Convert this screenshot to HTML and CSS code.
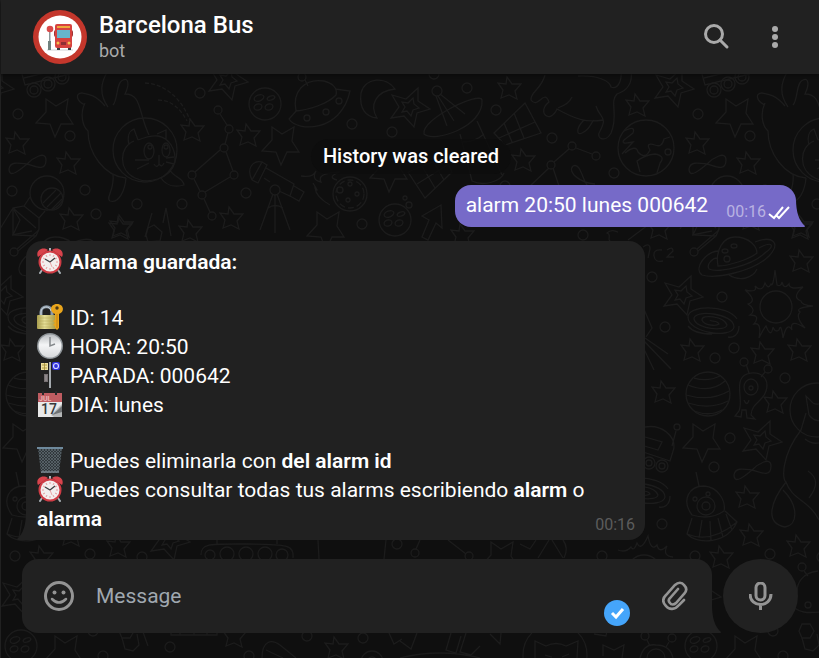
FILE: index.html
```html
<!DOCTYPE html>
<html lang="es">
<head>
  <meta charset="UTF-8">
  <meta name="viewport" content="width=device-width, initial-scale=1">
  <title>Barcelona Bus</title>
  <link rel="stylesheet" href="styles.css">
</head>
<body>
  <svg class="wallpaper" aria-hidden="true">
    <defs>
      <path id="star" d="M-3 -11 L2 -4 L11 -4 L5 3 L7 11 L-1 7 L-9 10 L-7 2 L-12 -5 L-4 -4 Z"/>
      <path id="bigstar" d="M-8 -18 L2 -11 L14 -18 L12 -4 L19 7 L7 7 L1 20 L-4 7 L-18 6 L-8 -5 Z"/>
      <g id="doublestar">
        <path d="M8 -19 L8 -6 L20 2 L7 6 L4 20 L-6 9 L-19 11 L-11 0 L-18 -12 L-4 -8 Z"/>
        <path d="M3 -9 L4 -3 L9 1 L3 3 L1 9 L-3 4 L-8 5 L-5 0 L-8 -5 L-2 -4 Z"/>
      </g>
      <circle id="ring" r="5"/>
      <circle id="dot" r="4"/>
      <g id="moon">
        <circle r="16"/>
        <ellipse cx="-6" cy="-6" rx="5" ry="3" transform="rotate(-20 -6 -6)"/>
        <ellipse cx="6" cy="-6" rx="4" ry="2" transform="rotate(-20 6 -6)"/>
        <ellipse cx="-7" cy="3" rx="4" ry="3" transform="rotate(-20 -7 3)"/>
        <ellipse cx="4" cy="3" rx="4" ry="3" transform="rotate(-20 4 3)"/>
      </g>
      <path id="infinity" d="M0 0 C6 -6 19 -14 19 -4 C19 9 6 1 0 0 C-8 -1 -17 -3 -18 5 C-18 15 -7 6 0 0 Z"/>
      <path id="spiral" d="M25 -3 C15 -18 -24 -17 -24 -5 C-24 11 20 17 22 5 C22 -9 -19 -13 -18 -3 C-16 7 14 10 15 3 C12 -6 -11 -8 -10 -2 C-8 4 5 4 7 2 C5 -2 -1 0 -2 -2 M27 4 C27 14 20 16 16 15 M-24 4 C-18 12 -3 12 0 12"/>

      <g id="tile">
        <!-- top row -->
        <use href="#doublestar" x="-6" y="87"/>
        <path d="M22 74 L25 85 L70 74 M24 78 L64 68"/>
        <circle cx="34" cy="90" r="7"/><circle cx="34" cy="90" r="4"/>
        <circle cx="48" cy="84" r="7"/><circle cx="48" cy="84" r="4"/>
        <circle cx="62" cy="77" r="7"/><circle cx="62" cy="77" r="4"/>
        <use href="#ring" x="18" y="114"/><use href="#ring" x="70" y="136"/>
        <use href="#ring" x="12" y="191"/><use href="#ring" x="85" y="190"/>
        <use href="#ring" x="96" y="214"/><use href="#ring" x="137" y="204"/>
        <use href="#ring" x="182" y="204"/><use href="#ring" x="246" y="193"/>
        <use href="#ring" x="200" y="93"/>
        <use href="#bigstar" x="54" y="117"/>
        <use href="#star" x="18" y="143"/><use href="#star" x="69" y="163"/>
        <use href="#star" x="72" y="219"/><use href="#star" x="122" y="226"/>
        <use href="#star" x="191" y="231"/><use href="#star" x="232" y="218"/>
        <use href="#star" x="193" y="130"/><use href="#star" x="249" y="135"/>
        <use href="#bigstar" x="280" y="145"/>
        <use href="#infinity" x="27" y="164"/>
        <use href="#doublestar" x="228" y="80"/>
        <use href="#moon" x="265" y="104"/>
        <path d="M145 83 C165 84 181 98 190 120 M158 100 C171 100 180 108 187 121" stroke-dasharray="4 2"/>

        <!-- hatched planet and capsule -->
        <circle cx="47" cy="193" r="17"/><circle cx="52" cy="199" r="11"/>
        <path d="M43 203 L56 190 M47 207 L61 193 M52 209 L62 199 M30 197 L24 206 L13 208 L13 235 L36 236 L39 229 L39 218 L45 211 M24 206 L39 218 M13 208 L36 228 M14 210 L20 220 L13 235 M13 208 L0 229 M36 236 L18 251"/>

        <!-- floating cat -->
        <circle cx="145" cy="150" r="32"/>
        <path d="M149 135 C138 112 142 94 125 94 C130 84 128 77 123 80 C116 82 118 100 113 105 M108 107 C98 93 102 80 108 71 M105 106 C96 95 88 94 82 93 C75 93 76 101 85 105 M85 103 C80 113 82 126 88 131 C88 153 104 176 126 178"/>
        <path d="M129 145 C127 137 129 131 134 129 L138 140 M134 141 C119 147 118 170 135 178 C147 184 170 180 175 162 C176 149 169 138 158 136 C151 135 143 138 138 140 M157 134 L166 130 L166 139 M113 174 C115 190 105 198 110 201 C119 204 125 190 126 178 M161 178 C167 187 177 187 184 185 C183 177 174 178 170 170"/>
        <ellipse cx="149" cy="151" rx="5" ry="8"/><ellipse cx="166" cy="150" rx="4" ry="7"/>
        <circle cx="150" cy="147" r="2"/><circle cx="166" cy="147" r="2"/>
        <path d="M159 155 L159 164 M154 164 Q157 169 159 164 Q162 168 164 163 M149 160 L135 160 M149 163 L137 169 M166 158 L174 157 M166 162 L174 164"/>

        <!-- constellation -->
        <use href="#dot" x="218" y="110"/><use href="#dot" x="229" y="129"/><use href="#dot" x="224" y="148"/>
        <use href="#dot" x="234" y="175"/><use href="#dot" x="202" y="195"/><use href="#dot" x="192" y="175"/>
        <use href="#dot" x="212" y="216"/>
        <path d="M220 114 L227 125 M228 133 L225 144 M220 150 L195 172 M226 152 L233 171 M230 177 L205 192 M194 179 L200 191 M204 199 L210 212"/>

        <!-- telescope -->
        <path d="M252 180 C246 168 253 160 262 162 L252 180 M262 162 L267 165 L258 183 L252 180 M266 168 L294 184 L290 196 L279 191 M264 178 L270 182 M294 186 L304 192 L299 201 L290 196 M273 194 L260 230 M275 195 L275 233 M277 194 L290 230 M268 208 Q275 203 283 208"/>
        <circle cx="275" cy="190" r="5"/>

        <!-- rocket tip and hexagon under the cat -->
        <path d="M152 213 L145 237 M163 223 L166 208 L171 236 M148 228 L154 225 L162 232 L160 241 L148 242 L146 235 Z"/>

        <!-- flying saucer -->
        <path d="M296 111 C292 92 304 78 324 81 C332 83 338 88 336 95 C328 104 308 110 296 111 M297 110 L289 119 C297 132 341 133 350 91 L335 89"/>
        <circle cx="307" cy="118" r="3"/><circle cx="326" cy="112" r="3"/><circle cx="339" cy="101" r="3"/>
        <use href="#dot" x="302" y="77"/><path d="M305 80 L308 86"/>

        <!-- crescent, radio dish, panels -->
        <path d="M395 89 C386 76 365 77 361 93 C359 109 366 117 377 118 C369 105 376 91 395 89 Z"/>
        <use href="#doublestar" x="410" y="107"/>
        <use href="#ring" x="467" y="88"/><use href="#ring" x="352" y="124"/><use href="#ring" x="392" y="132"/>
        <use href="#ring" x="496" y="110"/><use href="#ring" x="434" y="74"/><use href="#ring" x="362" y="224"/>
        <use href="#ring" x="552" y="138"/><use href="#ring" x="505" y="186"/>
        <use href="#star" x="510" y="88"/><use href="#star" x="524" y="160"/>
        <use href="#bigstar" x="388" y="172"/><use href="#bigstar" x="325" y="230"/>
        <use href="#ring" x="437" y="91"/>
        <path d="M436 96 L447 126 M438 96 L454 121 M440 94 L465 114 M424 134 C434 143 484 127 482 100 C480 91 421 119 424 134 Z M477 121 L502 175 M460 134 L472 181 C484 187 501 181 504 173 M463 142 Q475 142 484 134"/>
        <path d="M494 133 L525 103 L541 133 L505 145 Z M504 123 L512 142 M514 113 L524 138 M499 138 L535 122 M408 172 L445 157 L452 172 L425 198 Z M417 184 L449 164 M422 166 L435 188 M433 161 L444 180"/>

        <!-- comet -->
        <circle cx="350" cy="194" r="17"/><circle cx="350" cy="194" r="14" stroke-dasharray="6 3"/>
        <circle cx="350" cy="184" r="2"/><circle cx="357" cy="194" r="2"/><circle cx="348" cy="200" r="2"/><circle cx="340" cy="190" r="3"/>
        <path d="M301 176 Q313 178 316 171 Q311 180 321 182 Q316 173 340 172 Q326 177 337 180 M313 183 Q320 194 315 188 Q316 197 330 205"/>
        <use href="#moon" x="395" y="220"/>
        <circle cx="405" cy="198" r="2"/><circle cx="409" cy="205" r="3"/>
        <path d="M422 216 L441 205 L442 228 L436 223 L428 240 L422 237 L429 220 Z"/>
        <use href="#star" x="463" y="235"/>

        <!-- cat walking away -->
        <path d="M545 75 C541 90 530 92 531 100 C538 110 544 88 549 102 C536 112 550 125 557 109 C575 119 586 123 603 120 M558 108 Q569 104 572 97 M584 120 C575 129 577 136 582 133 C590 130 591 122 594 120 M596 106 C600 119 608 116 600 131 C595 139 606 143 611 133 C619 115 609 102 617 94 C627 91 633 83 631 70 M578 76 C600 75 610 82 611 87 C618 90 622 80 621 72"/>
        <use href="#star" x="638" y="105"/>
        <use href="#dot" x="572" y="146"/><use href="#dot" x="551" y="165"/><use href="#dot" x="596" y="156"/>
        <path d="M569 149 L554 162 M576 148 L592 154 M549 168 L530 186 M553 168 L559 186"/>
        <path d="M595 184 C580 183 567 172 573 166 C582 162 582 184 590 188"/>
        <use href="#ring" x="614" y="173"/>
        <circle cx="646" cy="148" r="28"/>
        <path d="M624 131 Q636 125 633 133 L624 140 Q620 145 633 142 L622 154 M625 153 Q636 144 638 152 Q645 160 650 150 Q645 142 655 145 Q662 148 664 139 L670 137 M640 172 L637 161 Q645 155 655 154 Q666 156 660 163 L657 173"/>
        <circle cx="668" cy="152" r="3"/>
        <use href="#ring" x="583" y="235"/>

        <!-- middle rows -->
        <path d="M612 242 C605 240 613 235 607 233 C612 228 616 232 618 232 M628 240 L648 225"/>
        <path d="M662 250 Q653 249 654 256 Q655 263 663 261 M667 250 Q673 246 673 251 L667 257 H674 M643 247 Q650 242 650 249 L648 258"/>
        <use href="#dot" x="14" y="252"/><path d="M17 249 L39 230 M12 235 L32 231"/>
        <use href="#star" x="-20" y="228"/><use href="#star" x="121" y="228"/>
        <path d="M38 266 C35 249 44 237 55 237 C70 237 77 247 77 253 C70 259 49 266 38 266 Z M75 242 C93 235 101 243 89 256 C73 272 35 279 22 275 C13 268 26 252 38 251 M79 248 C94 240 94 247 86 252 C71 267 37 273 29 269 C26 264 33 258 37 258 M49 275 C60 282 73 278 77 269"/>
        <ellipse cx="54" cy="246" rx="3" ry="2"/><ellipse cx="45" cy="251" rx="3" ry="2"/><ellipse cx="47" cy="259" rx="3" ry="3"/>
        <use href="#ring" x="-28" y="277"/><use href="#ring" x="42" y="297"/><use href="#ring" x="-15" y="327"/>
        <use href="#ring" x="54" y="348"/><use href="#ring" x="35" y="358"/><use href="#ring" x="105" y="378"/>
        <use href="#doublestar" x="3" y="295"/>
        <use href="#spiral" x="32" y="322"/>
        <circle cx="96" cy="307" r="16"/>
        <path d="M95 270 L97 285 Q101 287 102 282 Q104 290 109 284 Q109 290 123 287 Q111 297 121 301 Q121 305 133 306 Q114 308 120 312 Q115 317 125 328 Q109 318 112 330 Q107 321 103 338 Q101 322 99 330 Q95 333 93 327 Q91 339 86 326 Q84 328 79 338 Q82 322 74 324 Q81 315 70 315 Q77 310 68 304 Q78 301 65 290 Q78 293 75 286 Q82 293 85 283 Q88 290 91 284 Q93 288 95 270 Z"/>
        <use href="#star" x="122" y="261"/><use href="#star" x="13" y="350"/><use href="#star" x="83" y="353"/>
        <use href="#star" x="120" y="350"/><use href="#star" x="-16" y="392"/><use href="#star" x="96" y="402"/>
        <circle cx="28" cy="394" r="22"/>
        <path d="M14 378 Q28 382 40 376 M8 385 Q30 394 45 381 M6 395 Q30 402 49 391 M8 403 Q30 410 48 401 M14 411 Q30 417 42 410"/>
        <path d="M67 374 C80 370 90 378 86 391 C83 402 72 402 71 415 L75 419 L67 418 L66 410 L62 410 L61 417 L55 416 L59 411 C64 400 53 379 67 374 Z M66 364 L69 373 M85 372 L81 377 M64 400 Q67 407 69 400"/>
        <use href="#dot" x="64" y="362"/><use href="#dot" x="88" y="369"/>
        <ellipse cx="71" cy="387" rx="7" ry="8"/><circle cx="71" cy="388" r="2"/>
        <path d="M640 300 L652 328 L646 337 M645 338 L668 354 M643 340 L671 369 M642 345 L654 370"/>

        <!-- sitting cat -->
        <circle cx="137" cy="410" r="27"/>
        <path d="M129 415 L126 396 L133 403 Q138 406 146 401 M126 413 L121 430 C101 456 102 480 106 482 C91 501 84 523 105 527 C118 525 119 506 103 490 M106 482 C112 500 129 500 139 520 M128 471 C138 478 138 486 129 498 M129 415 Q137 425 146 417 M125 439 Q135 447 145 440"/>

        <!-- rover -->
        <path d="M645 427 C662 424 675 436 674 448 L670 461 L640 451 M645 437 L662 442 L658 450 L641 445 M672 446 L676 431"/>
        <circle cx="677" cy="427" r="3"/>
        <circle cx="649" cy="463" r="6"/><circle cx="649" cy="463" r="3"/>
        <circle cx="662" cy="466" r="6"/><circle cx="662" cy="466" r="3"/>
        <use href="#spiral" x="643" y="492"/>
        <use href="#bigstar" x="21" y="442"/>
        <use href="#ring" x="50" y="438"/><use href="#ring" x="34" y="467"/>
        <use href="#doublestar" x="82" y="440"/>
        <use href="#infinity" x="72" y="470"/>
        <path d="M12 515 C1 500 9 486 24 486 C39 487 46 502 44 511 C34 518 22 518 12 515 Z M12 518 L7 534 C18 545 47 544 57 522 L45 511 M22 520 L19 538 M30 521 L31 541 M38 518 L43 537 M46 514 L52 530 M19 486 L16 472 M7 534 Q31 544 57 522"/>
        <circle cx="26" cy="506" r="9"/><circle cx="26" cy="506" r="4"/><circle cx="15" cy="499" r="2"/><circle cx="28" cy="494" r="2"/>
        <use href="#star" x="68" y="497"/><use href="#star" x="72" y="535"/>
        <use href="#ring" x="662" y="524"/>

        <!-- strip between the messages and the composer -->
        <use href="#ring" x="15" y="556"/><use href="#ring" x="90" y="554"/><use href="#ring" x="142" y="557"/>
        <use href="#star" x="42" y="557"/><use href="#star" x="119" y="546"/>
        <use href="#doublestar" x="170" y="540"/>
        <path d="M217 537 L217 544 M277 537 L277 544 M201 555 C201 543 209 544 246 544 C288 544 294 545 293 558"/>
        <circle cx="210" cy="555" r="5"/><circle cx="227" cy="554" r="7"/><circle cx="246" cy="554" r="7"/>
        <circle cx="265" cy="554" r="7"/><circle cx="282" cy="555" r="6"/>
        <path d="M318 540 L319 559 M386 540 L384 559 M448 540 L466 554 M420 540 L416 549"/>
        <use href="#ring" x="397" y="544"/><use href="#dot" x="415" y="553"/><use href="#dot" x="469" y="556"/>
        <use href="#bigstar" x="499" y="560"/>
        <path d="M520 544 L530 549 L536 540 M538 558 L549 540 M552 540 L563 558 M564 558 Q569 548 563 540"/>
        <use href="#ring" x="602" y="556"/>
        <circle cx="644" cy="572" r="17"/>
        <path d="M618 550 Q626 553 631 547 Q634 552 637 543 Q641 552 648 536 Q651 552 657 545 Q659 554 667 546 Q662 556 673 557"/>

        <!-- bottom row -->
        <use href="#doublestar" x="21" y="595"/>
        <use href="#moon" x="21" y="646"/>
        <use href="#bigstar" x="63" y="654"/>
        <use href="#ring" x="93" y="631"/><use href="#ring" x="103" y="656"/><use href="#ring" x="170" y="647"/>
        <use href="#ring" x="249" y="656"/><use href="#star" x="235" y="636"/>
        <path d="M122 638 L125 649 L133 651 L139 645 L137 634 M143 632 L148 646 M171 630 L171 635 L217 635 L217 630 M180 630 L180 635 M194 630 L194 635 M207 630 L207 635 M262 658 C262 640 272 639 280 645 L296 658 M266 650 L283 658"/>
        <path d="M122 624 L130 624 L134 631 L130 638 L122 638 L119 631 Z"/>
        <path d="M138 571 C122 573 117 583 117 592 L110 603 C117 614 130 613 140 612"/>
        <circle cx="128" cy="605" r="3"/><use href="#dot" x="122" y="567"/><path d="M124 571 L128 576"/>
        <use href="#ring" x="307" y="636"/><use href="#star" x="337" y="648"/><use href="#ring" x="363" y="638"/>
        <circle cx="372" cy="662" r="11"/><circle cx="372" cy="662" r="5"/>
        <path d="M389 633 L394 644 L402 639 M400 641 L411 649 L417 633 M451 633 L446 650 L456 653 L461 636 M466 633 L460 652 L471 655 L480 646 M400 658 Q440 648 480 658 M490 634 L500 644 L501 633"/>
        <circle cx="555" cy="655" r="32"/>
        <path d="M535 658 L535 641 L546 646 Q556 641 566 646 L578 641 L577 658 M545 655 L552 657 M562 657 L569 654"/>
        <path d="M603 656 L603 645 L614 650 L624 645 L622 658 M640 658 Q644 643 656 645 Q670 645 673 658"/>
        <use href="#dot" x="645" y="636"/><use href="#dot" x="672" y="638"/>
        <path d="M647 640 L650 646 M669 642 L666 647 M594 634 L606 636 L607 630"/>
        <circle cx="656" cy="658" r="9"/>
      </g>
    </defs>
    <use href="#tile" x="-680"/>
    <use href="#tile"/>
    <use href="#tile" x="680"/>
  </svg>

  <!-- emoji used in the messages -->
  <svg class="sprite" aria-hidden="true">
    <symbol id="alarm" viewBox="0 0 26 26">
      <path d="M5 22 L3 25 M21 22 L23 25" stroke="#a9b0b5" stroke-width="2" stroke-linecap="round"/>
      <path d="M1 9 C-2 3 5 -2 11 2 Z M25 9 C28 3 21 -2 15 2 Z" fill="#d8434c"/>
      <path d="M12 0 H14 V4 H12 Z" fill="#aab4bb"/>
      <circle cx="13" cy="14" r="11.5" fill="#cf3c45"/>
      <circle cx="13" cy="14" r="9.5" fill="#f3eeee"/>
      <path d="M13 6 V8 M13 20 V22 M5 14 H7 M19 14 H21 M9 7 L10 9 M17 7 L16 9 M9 21 L10 19 M17 21 L16 19 M6 10 L8 11 M20 10 L18 11 M6 18 L8 17 M20 18 L18 17" stroke="#e69a9c"/>
      <path d="M8 11 L13 14 L18 10" fill="none" stroke="#3c4043" stroke-width="1.3"/>
      <path d="M13 14 L15 19" stroke="#e5868a" stroke-width=".7"/>
    </symbol>
    <symbol id="lock" viewBox="0 0 26 26">
      <defs>
        <linearGradient id="brass"><stop offset="0" stop-color="#a79c4c"/><stop offset=".4" stop-color="#e5df98"/><stop offset="1" stop-color="#a79a45"/></linearGradient>
      </defs>
      <path d="M4 12 V8 C4 1 15 1 15 8 V12" fill="none" stroke="#8b9aa8" stroke-width="3"/>
      <path d="M4 11 V8 C4 2 13 1 14 7" fill="none" stroke="#cad3da" stroke-width="1"/>
      <rect x="0" y="11" width="19" height="14" rx="1" fill="url(#brass)"/>
      <path d="M0 14 H19 M0 17 H19 M0 20 H19 M0 23 H19" stroke="#b0a557" stroke-width=".5"/>
      <path d="M20 0 C27 0 28 8 22 10 L22 24 L20 26 L18 24 V22 L16 21 L18 19 L16 17 L18 16 V10 C12 8 13 0 20 0 Z" fill="#e9a51c"/>
      <circle cx="20" cy="4" r="1.700" fill="#4a3716"/>
      <path d="M20 10 V24" stroke="#b77b12" stroke-width=".8"/>
    </symbol>
    <symbol id="clock" viewBox="0 0 26 26">
      <defs>
        <linearGradient id="glass" x2="0" y2="1"><stop offset="0" stop-color="#b9bdc0"/><stop offset=".45" stop-color="#f4f5f6"/><stop offset="1" stop-color="#d8dadc"/></linearGradient>
      </defs>
      <circle cx="13" cy="13" r="13" fill="#8f9599"/>
      <circle cx="13" cy="13" r="11.5" fill="url(#glass)"/>
      <path d="M13 4 V13 L18 11" fill="none" stroke="#85898c" stroke-width="1.5"/>
    </symbol>
    <symbol id="stop" viewBox="0 0 26 26">
      <rect x="12" y="0" width="2" height="26" fill="#a5aaae"/>
      <rect x="4" y="1" width="7" height="7" fill="#eee09c"/>
      <path d="M5 3 H10 M5 6 H10 M7.500 1 V8" stroke="#a18c35" stroke-width=".8"/>
      <rect x="15" y="0" width="8" height="8" rx="2" fill="#3030dc"/>
      <circle cx="19" cy="4" r="2.500" fill="none" stroke="#d4d7ff" stroke-width="1.2"/>
      <rect x="7" y="12" width="4" height="8" fill="#777173"/>
      <path d="M8 14 H10 M8 16 H10 M8 18 H10" stroke="#b8b2b3" stroke-width=".7"/>
    </symbol>
    <symbol id="basket" viewBox="0 0 26 26">
      <defs>
        <pattern id="mesh" width="3" height="3" patternUnits="userSpaceOnUse"><path d="M0 0 L3 3 M3 0 L0 3" stroke="#6a757c" stroke-width=".6"/></pattern>
      </defs>
      <path d="M1 1 H25 L22 26 H4 Z" fill="#30373b"/>
      <path d="M1 1 H25 L22 26 H4 Z" fill="url(#mesh)"/>
      <path d="M0 1 H26" stroke="#6e899c" stroke-width="2"/>
      <path d="M4 25 H22" stroke="#77838c" stroke-width="1.5"/>
    </symbol>
  </svg>

  <div class="app">
    <header class="topbar">
      <svg class="avatar" viewBox="0 0 54 54" role="img" aria-label="Barcelona Bus">
        <circle cx="27" cy="27" r="27" fill="#c4372c"/>
        <circle cx="27" cy="27" r="21.500" fill="#fff"/>
        <path d="M14 40 H40" stroke="#cfd4d6"/>
        <rect x="16" y="21" width="1.500" height="19" fill="#8d989b"/>
        <rect x="15" y="31" width="3" height="9" fill="#71827f"/>
        <circle cx="17" cy="19" r="3.300" fill="#d94a4a"/>
        <rect x="24" y="37" width="3" height="3" fill="#393b40"/>
        <rect x="35" y="37" width="3" height="3" fill="#393b40"/>
        <rect x="21" y="20" width="19" height="7" rx="2" fill="#9e3436"/>
        <rect x="22" y="14" width="17" height="24" rx="2" fill="#d6423f"/>
        <rect x="24" y="16" width="13" height="2" fill="#eea93b"/>
        <rect x="24" y="20" width="13" height="8" fill="#67b5cc"/>
        <circle cx="25" cy="33" r="1.500" fill="#f4c04c"/>
        <circle cx="36" cy="33" r="1.500" fill="#f4c04c"/>
        <rect x="28" y="32" width="5" height="3" fill="#8e2f34"/>
      </svg>
      <div class="peer">
        <h1>Barcelona Bus</h1>
        <p>bot</p>
      </div>
      <button type="button" class="icon-btn" aria-label="Search">
        <svg width="26" height="26" viewBox="0 0 26 26"><circle cx="10" cy="10" r="8.500"/><path d="M16 16 L23 23" stroke-linecap="round"/></svg>
      </button>
      <button type="button" class="icon-btn" aria-label="More">
        <svg width="26" height="26" viewBox="0 0 26 26" class="dots"><circle cx="13" cy="5" r="3"/><circle cx="13" cy="13" r="3"/><circle cx="13" cy="21" r="3"/></svg>
      </button>
    </header>

    <main class="chat">
      <div class="service">History was cleared</div>

      <div class="bubble out">
        <span>alarm 20:50 lunes 000642</span>
        <span class="meta">00:16<svg width="22" height="14" viewBox="0 0 22 14"><path d="M1 8 L6 12 L15 1 M9 10 L11 12 L21 1"/></svg></span>
        <svg class="tail" width="9" height="28" viewBox="0 0 9 28"><path d="M0 0 C0 13 3 22 9 27 Q9 28 8 28 H0 Z"/></svg>
      </div>

      <div class="bubble in">
        <p><svg class="emoji"><use href="#alarm"/></svg><b>Alarma guardada:</b></p>
        <p>
          <svg class="emoji"><use href="#lock"/></svg>ID: 14<br>
          <svg class="emoji"><use href="#clock"/></svg>HORA: 20:50<br>
          <svg class="emoji"><use href="#stop"/></svg>PARADA: 000642<br>
          <svg class="emoji" viewBox="0 0 26 26">
            <rect x="1" y="2" width="24" height="24" fill="#e9e9e9"/>
            <rect x="1" y="2" width="24" height="9" fill="#bf5c61"/>
            <path d="M6 0 V4 M19 0 V4" stroke="#28282a" stroke-width="2"/>
            <text x="2" y="10" font-size="7" font-weight="700" fill="#e8b2b5">JUL</text>
            <path d="M25 13 L14 24 L17 26 H25 Z" fill="#b4b6b7"/>
            <path d="M25 15 Q21 19 15 24 L25 21 Z" fill="#6e7173"/>
            <text x="4" y="23" font-size="14" font-weight="500" fill="#37393b">17</text>
          </svg>DIA: lunes
        </p>
        <p>
          <svg class="emoji"><use href="#basket"/></svg>Puedes eliminarla con <b>del alarm id</b><br>
          <svg class="emoji"><use href="#alarm"/></svg>Puedes consultar todas tus alarms escribiendo <b>alarm</b> o <b>alarma</b>
        </p>
        <span class="meta">00:16</span>
        <svg class="tail" width="9" height="28" viewBox="0 0 9 28"><path d="M9 0 C9 13 6 22 0 27 Q0 28 1 28 H9 Z"/></svg>
      </div>
    </main>

    <form class="composer">
      <div class="field">
        <button type="button" class="icon-btn" aria-label="Emoji">
          <svg width="30" height="30" viewBox="0 0 30 30"><circle cx="15" cy="15" r="13.500"/><path d="M8 18 Q15 25 22 18" stroke-width="2.5" stroke-linecap="round"/><g class="eyes"><circle cx="10.500" cy="11.500" r="2"/><circle cx="19.500" cy="11.500" r="2"/></g></svg>
        </button>
        <input type="text" placeholder="Message" aria-label="Message">
        <button type="button" class="icon-btn" aria-label="Attach">
          <svg width="26" height="30" viewBox="0 0 26 30"><path d="M22 19 L17 24 C13 29 7 29 4 25 C0 21 1 17 4 14 L13 4 C16 1 20 1 22 4 C25 7 25 10 22 13 L14 22 C12 24 9 24 8 22 C6 20 7 18 8 17 L16 8" stroke-width="2.6" stroke-linecap="round"/></svg>
        </button>
        <span class="badge"><svg width="26" height="26" viewBox="0 0 26 26"><path d="M8 13 L12 17 L19 9"/></svg></span>
        <svg class="tail" width="9" height="28" viewBox="0 0 9 28"><path d="M0 0 C0 13 3 22 9 27 Q9 28 8 28 H0 Z"/></svg>
      </div>
      <button type="button" class="mic" aria-label="Record voice message">
        <svg width="24" height="28" viewBox="0 0 24 28"><rect x="7" y="1" width="9" height="17" rx="4.500"/><path d="M1 12 C1 26 22 26 22 12 M11.500 23 V28"/></svg>
      </button>
    </form>
  </div>
</body>
</html>
```

FILE: styles.css
```css
* {
  box-sizing: border-box;
}

body {
  margin: 0;
  background-color: #0f0f0f;
  color: #fff;
  font-family: Roboto, "Liberation Sans", sans-serif;
  font-size: 21px;
  line-height: 29px;
}

h1, p {
  margin: 0;
}

b {
  font-weight: 600;
}

button {
  border: 0;
  padding: 0;
  background: none;
  cursor: pointer;
}

.wallpaper {
  position: absolute;
  top: 0;
  left: 0;
  width: 100%;
  height: 100%;
  fill: none;
  stroke: #1c1c1c;
  stroke-width: 1.3;
}

.sprite {
  position: absolute;
  width: 0;
  height: 0;
}

.app {
  position: relative;
  display: flex;
  flex-direction: column;
  min-height: 100vh;
  border-left: 1px solid #212121;
}

/* header */
.topbar {
  display: flex;
  align-items: center;
  height: 74px;
  padding: 0 31px 0 32px;
  background-color: #212121;
  box-shadow: 0 1px 3px #0a0a0a;
}

.avatar {
  width: 54px;
  height: 54px;
}

.peer {
  flex: 1;
  margin-left: 12px;
}

.peer h1 {
  font-size: 24px;
  font-weight: 500;
  line-height: 28px;
}

.peer p {
  color: #aaa;
  font-size: 18px;
  line-height: 24px;
}

.icon-btn {
  display: flex;
  fill: none;
  stroke: #aaa;
  stroke-width: 3;
}

.topbar .icon-btn {
  margin-left: 32px;
}

.topbar .dots {
  fill: #aaa;
  stroke: none;
}

/* messages */
.chat {
  flex: 1;
  display: flex;
  flex-direction: column;
  justify-content: flex-end;
  padding: 0 23px 19px 25px;
}

.service {
  align-self: center;
  margin-bottom: 11px;
  padding: 3px 12px;
  border-radius: 18px;
  background-color: rgba(13, 13, 13, .8);
  font-size: 20px;
  font-weight: 500;
}

.bubble {
  position: relative;
  padding: 6px 11px 7px;
  border-radius: 16px;
}

.out {
  align-self: flex-end;
  display: flex;
  margin-bottom: 14px;
  border-bottom-right-radius: 0;
  background-color: #766ac8;
}

.in {
  align-self: flex-start;
  max-width: 619px;
  padding-top: 7px;
  padding-bottom: 6px;
  border-bottom-left-radius: 0;
  background-color: #212121;
}

.in p + p {
  margin-top: 27px;
}

.emoji {
  width: 26px;
  height: 26px;
  margin-right: 7px;
  vertical-align: -5px;
}

.meta {
  font-size: 16px;
  line-height: 20px;
}

.out .meta {
  display: flex;
  align-self: flex-end;
  margin: 0 -5px -2px 18px;
  color: #b9b2e2;
}

.out .meta svg {
  margin: 4px 0 0 2px;
  fill: none;
  stroke: #fff;
  stroke-width: 2;
}

.in .meta {
  position: absolute;
  right: 10px;
  bottom: 5px;
  color: #5c5c5c;
}

.tail {
  position: absolute;
  bottom: 0;
  fill: #212121;
}

.out .tail,
.field .tail {
  left: 100%;
}

.out .tail {
  fill: #766ac8;
}

.in .tail {
  right: 100%;
}

/* composer */
.composer {
  display: flex;
  gap: 11px;
  padding: 0 21px 25px;
}

.field {
  position: relative;
  flex: 1;
  display: flex;
  align-items: center;
  height: 74px;
  padding: 0 24px 0 22px;
  border-radius: 16px 16px 0 16px;
  background-color: #212121;
}

.field input {
  flex: 1;
  min-width: 0;
  margin: 0 22px;
  padding: 0;
  border: 0;
  outline: 0;
  background: none;
  color: #fff;
  font: inherit;
}

.field input::placeholder {
  color: #a0a8b0;
  opacity: 1;
}

.field .icon-btn {
  stroke: #949494;
}

.field .eyes {
  fill: #949494;
  stroke: none;
}

.badge {
  position: absolute;
  right: 82px;
  bottom: 7px;
  width: 26px;
  height: 26px;
  border-radius: 50%;
  background-color: #45a5fa;
}

.badge svg {
  display: block;
  fill: none;
  stroke: #fff;
  stroke-width: 3;
}

.mic {
  display: flex;
  align-items: center;
  justify-content: center;
  width: 75px;
  height: 74px;
  border-radius: 50%;
  background-color: #212121;
  fill: none;
  stroke: #949494;
  stroke-width: 3;
}
```
